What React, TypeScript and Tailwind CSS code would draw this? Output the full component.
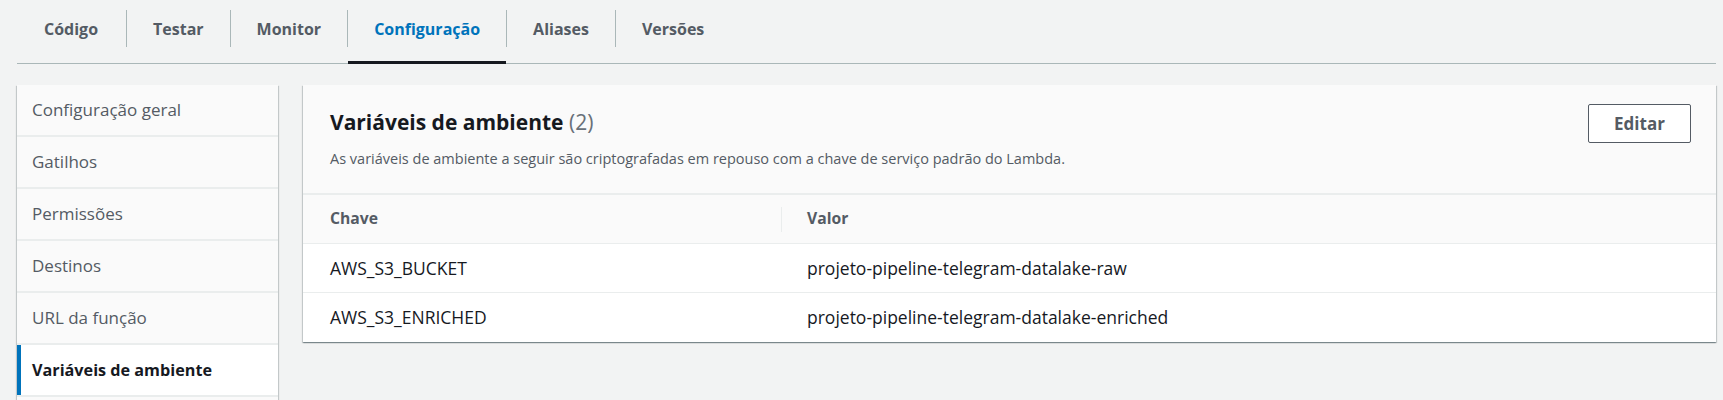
import React from "react";

const tabs = ["Código", "Testar", "Monitor", "Configuração", "Aliases", "Versões"];
const activeTab = "Configuração";

const sideItems = [
  "Configuração geral",
  "Gatilhos",
  "Permissões",
  "Destinos",
  "URL da função",
  "Variáveis de ambiente",
  "",
];
const activeSide = "Variáveis de ambiente";

const envVars = [
  { key: "AWS_S3_BUCKET", value: "projeto-pipeline-telegram-datalake-raw" },
  { key: "AWS_S3_ENRICHED", value: "projeto-pipeline-telegram-datalake-enriched" },
];

const cardShadow =
  "shadow-[0_1px_1px_0_rgba(0,28,36,0.3),1px_1px_1px_0_rgba(0,28,36,0.15),-1px_1px_1px_0_rgba(0,28,36,0.15)]";

const App: React.FC = () => {
  return (
    <div
      className="h-[400px] overflow-hidden bg-[#f2f3f3] pl-[17px] pr-[7px]"
      style={{ fontFamily: '"Open Sans", "Noto Sans", sans-serif' }}
    >
      {/* Tabs */}
      <div className="flex h-[64px] border-b border-[#aab7b8]">
        {tabs.map((tab, i) => (
          <React.Fragment key={tab}>
            {i > 0 && <div className="mt-[10px] h-[37px] w-px bg-[#aab7b8]" />}
            <div
              className={`-mb-px border-b-[3px] pt-[10px] ${
                i === 0 ? "pl-[27px] pr-[28px]" : "px-[26px]"
              } ${tab === activeTab ? "border-[#16191f]" : "border-transparent"}`}
            >
              <div
                className={`flex h-[37px] items-center text-[16px] font-bold ${
                  tab === activeTab ? "text-[#0073bb]" : "text-[#545b64]"
                }`}
              >
                {tab}
              </div>
            </div>
          </React.Fragment>
        ))}
      </div>

      <div className="mt-[21px] flex items-start gap-[25px]">
        {/* Side navigation */}
        <div className={`flex w-[261px] shrink-0 flex-col gap-[2px] bg-[#eaeded] ${cardShadow}`}>
          {sideItems.map((item, i) =>
            item === activeSide ? (
              <div
                key={i}
                className="flex h-[50px] items-center border-l-4 border-[#0073bb] bg-white pl-[11px] text-[16.2px] font-bold text-[#16191f]"
              >
                {item}
              </div>
            ) : (
              <div
                key={i}
                className="flex h-[50px] items-center bg-[#fafafa] pl-[15px] text-[17px] text-[#545b64]"
              >
                {item}
              </div>
            ),
          )}
        </div>

        {/* Environment variables panel */}
        <div className={`flex flex-1 flex-col bg-white ${cardShadow}`}>
          <div className="flex h-[110px] justify-between border-b-2 border-[#eaeded] bg-[#fafafa] pl-[27px] pr-[25px]">
            <div className="pt-[22px]">
              <h2 className="text-[21px] leading-[30px] font-bold text-[#16191f]">
                Variáveis de ambiente{" "}
                <span className="font-normal text-[#687078]">(2)</span>
              </h2>
              <p className="mt-[12px] text-[14.5px] leading-[20px] text-[#545b64]">
                As variáveis de ambiente a seguir são criptografadas em repouso com a chave de serviço padrão do Lambda.
              </p>
            </div>
            <div className="pt-[19px]">
              <button className="h-[39px] w-[103px] rounded-[2px] border border-[#545b64] bg-white text-[17px] font-bold text-[#545b64]">
                Editar
              </button>
            </div>
          </div>

          <div className="grid h-[48px] grid-cols-[478px_1fr] items-center bg-[#fafafa] text-[15.7px] font-bold text-[#545b64]">
            <div className="pl-[27px]">Chave</div>
            <div className="flex items-center">
              <span className="h-[25px] w-px bg-[#eaeded]" />
              <span className="pl-[25px]">Valor</span>
            </div>
          </div>

          {envVars.map((v, i) => (
            <div
              key={v.key}
              className={`grid grid-cols-[478px_1fr] items-center border-t border-[#eaeded] text-[17.5px] text-[#16191f] ${
                i === envVars.length - 1 ? "h-[50px]" : "h-[49px]"
              }`}
            >
              <div className="pl-[27px]">{v.key}</div>
              <div className="pl-[26px]">{v.value}</div>
            </div>
          ))}
        </div>
      </div>
    </div>
  );
};

export default App;
